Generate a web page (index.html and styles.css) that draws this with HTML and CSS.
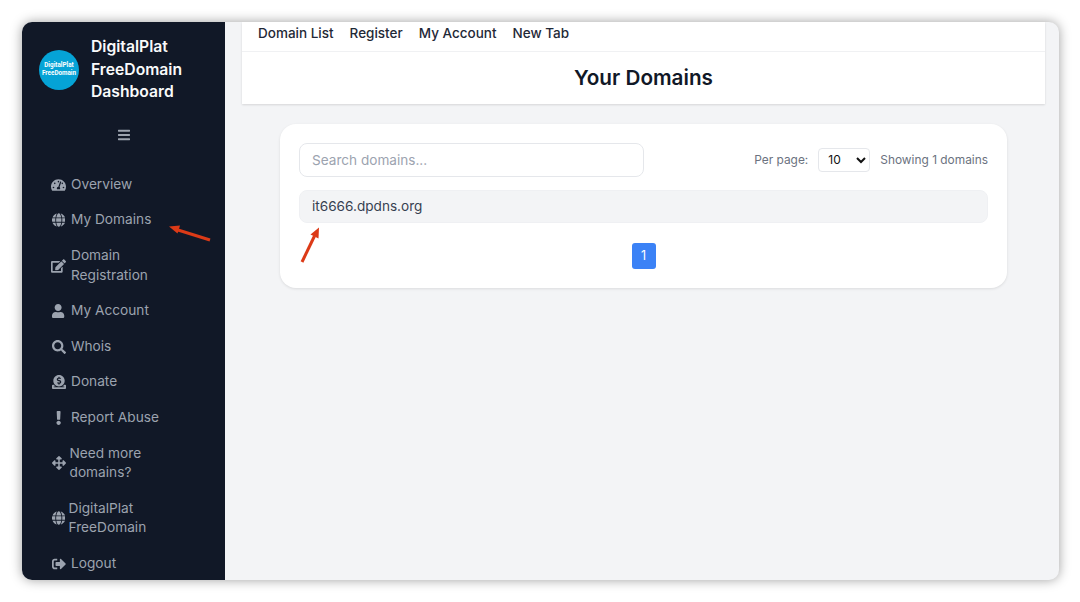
FILE: index.html
```html
<!DOCTYPE html>
<html lang="en">
<head>
<meta charset="utf-8">
<title>Your Domains</title>
<link rel="stylesheet" href="styles.css">
</head>
<body>
<div class="window">
  <aside class="sidebar">
    <div class="brand">
      <div class="logo"><span>DigitalPlat</span><span>FreeDomain</span></div>
      <div class="brand-title">DigitalPlat FreeDomain Dashboard</div>
    </div>
    <div class="toggle">
      <svg class="bars" viewBox="0 0 448 512"><path d="M16 132h416c8.837 0 16-7.163 16-16V76c0-8.837-7.163-16-16-16H16C7.163 60 0 67.163 0 76v40c0 8.837 7.163 16 16 16zm0 160h416c8.837 0 16-7.163 16-16v-40c0-8.837-7.163-16-16-16H16c-8.837 0-16 7.163-16 16v40c0 8.837 7.163 16 16 16zm0 160h416c8.837 0 16-7.163 16-16v-40c0-8.837-7.163-16-16-16H16c-8.837 0-16 7.163-16 16v40c0 8.837 7.163 16 16 16z"/></svg>
    </div>
    <nav class="menu">
      <a class="item"><span class="ic"><svg viewBox="0 0 576 512"><path d="M288 32C128.94 32 0 160.94 0 320c0 52.8 14.25 102.26 39.06 144.8 5.61 9.62 16.3 15.2 27.44 15.2h443c11.14 0 21.83-5.58 27.44-15.2C561.75 422.26 576 372.8 576 320c0-159.06-128.94-288-288-288zm0 64c14.71 0 26.58 10.13 30.32 23.65-1.11 2.26-2.64 4.23-3.45 6.67l-9.22 27.67c-5.13 3.49-10.97 6.01-17.64 6.01-17.67 0-32-14.33-32-32S270.33 96 288 96zM96 384c-17.67 0-32-14.33-32-32s14.33-32 32-32 32 14.33 32 32-14.33 32-32 32zm48-160c-17.67 0-32-14.33-32-32s14.33-32 32-32 32 14.33 32 32-14.33 32-32 32zm246.77-72.41l-61.33 184C343.13 347.33 352 364.54 352 384c0 11.72-3.38 22.55-8.88 32H232.88c-5.5-9.45-8.88-20.28-8.88-32 0-33.94 26.5-61.43 59.9-63.59l61.34-184.01c4.17-12.56 17.73-19.45 30.36-15.17 12.57 4.19 19.35 17.77 15.17 30.36zm14.66 57.2l15.52-46.55c3.47-1.29 7.13-2.23 11.05-2.23 17.67 0 32 14.33 32 32s-14.33 32-32 32c-11.38-.01-20.89-6.28-26.57-15.22zM480 384c-17.67 0-32-14.33-32-32s14.33-32 32-32 32 14.33 32 32-14.33 32-32 32z"/></svg></span><span>Overview</span></a>
      <a class="item"><span class="ic"><svg viewBox="0 0 496 512"><path d="M336.5 160C322 70.7 287.8 8 248 8s-74 62.7-88.5 152h177zM152 256c0 22.2 1.2 43.5 3.3 64h185.3c2.1-20.5 3.3-41.8 3.3-64s-1.2-43.5-3.3-64H155.3c-2.1 20.5-3.3 41.8-3.3 64zm324.7-96c-28.6-67.9-86.5-120.4-158-141.6 24.4 33.8 41.2 84.7 50 141.6h108zM177.2 18.4C105.8 39.6 47.8 92.1 19.3 160h108c8.7-56.9 25.5-107.8 49.9-141.6zM487.4 192H372.7c2.1 21 3.3 42.5 3.3 64s-1.2 43-3.3 64h114.6c5.5-20.5 8.6-41.8 8.6-64s-3.1-43.5-8.5-64zM120 256c0-21.5 1.2-43 3.3-64H8.6C3.2 212.5 0 233.8 0 256s3.2 43.5 8.6 64h114.6c-2-21-3.2-42.5-3.2-64zm39.5 96c14.5 89.3 48.7 152 88.5 152s74-62.7 88.5-152h-177zm159.3 141.6c71.4-21.2 129.4-73.7 158-141.6h-108c-8.8 56.9-25.6 107.8-50 141.6zM19.3 352c28.6 67.9 86.5 120.4 158 141.6-24.4-33.8-41.2-84.7-50-141.6h-108z"/></svg></span><span>My Domains</span></a>
      <a class="item"><span class="ic"><svg viewBox="0 0 576 512"><path d="M402.6 83.2l90.2 90.2c3.8 3.8 3.8 10 0 13.8L274.4 405.6l-92.8 10.3c-12.4 1.4-22.9-9.1-21.5-21.5l10.3-92.8L388.8 83.2c3.8-3.8 10-3.8 13.8 0zm162-22.9l-48.8-48.8c-15.2-15.2-39.9-15.2-55.2 0l-35.4 35.4c-3.8 3.8-3.8 10 0 13.8l90.2 90.2c3.8 3.8 10 3.8 13.8 0l35.4-35.4c15.2-15.3 15.2-40 0-55.2zM384 346.2V448H64V128h229.8c3.2 0 6.2-1.3 8.5-3.5l40-40c7.6-7.6 2.2-20.5-8.5-20.5H48C21.5 64 0 85.5 0 112v352c0 26.5 21.5 48 48 48h352c26.5 0 48-21.5 48-48V306.2c0-10.7-12.9-16-20.5-8.5l-40 40c-2.2 2.3-3.5 5.3-3.5 8.5z"/></svg></span><span class="wrap">Domain<br>Registration</span></a>
      <a class="item"><span class="ic"><svg viewBox="0 0 448 512"><path d="M224 256c70.7 0 128-57.3 128-128S294.7 0 224 0 96 57.3 96 128s57.3 128 128 128zm89.6 32h-16.7c-22.2 10.2-46.9 16-72.9 16s-50.6-5.8-72.9-16h-16.7C60.2 288 0 348.2 0 422.4V464c0 26.5 21.5 48 48 48h352c26.5 0 48-21.5 48-48v-41.6c0-74.2-60.2-134.4-134.4-134.4z"/></svg></span><span>My Account</span></a>
      <a class="item"><span class="ic"><svg viewBox="0 0 512 512"><path d="M505 442.7L405.3 343c-4.5-4.5-10.6-7-17-7H372c27.6-35.3 44-79.7 44-128C416 93.1 322.9 0 208 0S0 93.1 0 208s93.1 208 208 208c48.3 0 92.7-16.4 128-44v16.3c0 6.4 2.5 12.5 7 17l99.7 99.7c9.4 9.4 24.6 9.4 33.9 0l28.3-28.3c9.4-9.4 9.4-24.6.1-34zM208 336c-70.7 0-128-57.2-128-128 0-70.7 57.2-128 128-128 70.7 0 128 57.2 128 128 0 70.7-57.2 128-128 128z"/></svg></span><span>Whois</span></a>
      <a class="item"><span class="ic"><svg viewBox="0 0 512 512"><path d="M256 416c114.9 0 208-93.1 208-208S370.9 0 256 0 48 93.1 48 208s93.1 208 208 208zM233.8 97.4V80.6c0-9.2 7.4-16.6 16.6-16.6h11.1c9.2 0 16.6 7.4 16.6 16.6v17c15.5.8 30.5 6.1 43 15.4 5.6 4.1 6.2 12.3 1.2 17.1L306 145.6c-3.8 3.7-9.5 3.8-14 1-5.4-3.4-11.4-5.1-17.8-5.1h-38.9c-9 0-16.3 8.2-16.3 18.3 0 8.2 5 15.5 12.1 17.6l62.3 18.7c25.7 7.7 43.7 32.4 43.7 60.1 0 34-26.4 61.5-59.1 62.4v16.8c0 9.2-7.4 16.6-16.6 16.6h-11.1c-9.2 0-16.6-7.4-16.6-16.6v-17c-15.5-.8-30.5-6.1-43-15.4-5.6-4.1-6.2-12.3-1.2-17.1l16.3-15.5c3.8-3.7 9.5-3.8 14-1 5.4 3.4 11.4 5.1 17.8 5.1h38.9c9 0 16.3-8.2 16.3-18.3 0-8.2-5-15.5-12.1-17.6l-62.3-18.7c-25.7-7.7-43.7-32.4-43.7-60.1.1-34 26.4-61.5 59.1-62.4zM480 352h-32.5c-19.6 26-44.6 47.7-73 64h63.8c5.3 0 9.6 3.6 9.6 8v16c0 4.4-4.3 8-9.6 8H73.6c-5.3 0-9.6-3.6-9.6-8v-16c0-4.4 4.3-8 9.6-8h63.8c-28.4-16.3-53.3-38-73-64H32c-17.7 0-32 14.3-32 32v96c0 17.7 14.3 32 32 32h448c17.7 0 32-14.3 32-32v-96c0-17.7-14.3-32-32-32z"/></svg></span><span>Donate</span></a>
      <a class="item"><span class="ic"><svg viewBox="0 0 192 512"><path d="M176 432c0 44.112-35.888 80-80 80s-80-35.888-80-80 35.888-80 80-80 80 35.888 80 80zM25.26 25.199l13.6 272C39.499 309.972 50.041 320 62.83 320h66.34c12.789 0 23.331-10.028 23.97-22.801l13.6-272C167.425 11.49 156.496 0 142.77 0H49.23C35.504 0 24.575 11.49 25.26 25.199z"/></svg></span><span>Report Abuse</span></a>
      <a class="item"><span class="ic"><svg viewBox="0 0 512 512"><path d="M352.201 425.775l-79.196 79.196c-9.373 9.373-24.568 9.373-33.941 0l-79.196-79.196c-15.119-15.119-4.411-40.971 16.971-40.97h51.162L228 284H127.196v51.162c0 21.382-25.851 32.09-40.971 16.971L7.029 272.937c-9.373-9.373-9.373-24.569 0-33.941L86.225 159.8c15.119-15.119 40.971-4.411 40.971 16.971V228H228V127.196h-51.23c-21.382 0-32.09-25.851-16.971-40.971l79.196-79.196c9.373-9.373 24.568-9.373 33.941 0l79.196 79.196c15.119 15.119 4.411 40.971-16.971 40.971h-51.162V228h100.804v-51.162c0-21.382 25.851-32.09 40.97-16.971l79.196 79.196c9.373 9.373 9.373 24.569 0 33.941L425.773 352.2c-15.119 15.119-40.971 4.411-40.97-16.971V284H284v100.804h51.23c21.382 0 32.09 25.851 16.971 40.971z"/></svg></span><span class="wrap narrow">Need more<br>domains?</span></a>
      <a class="item"><span class="ic"><svg viewBox="0 0 496 512"><path d="M336.5 160C322 70.7 287.8 8 248 8s-74 62.7-88.5 152h177zM152 256c0 22.2 1.2 43.5 3.3 64h185.3c2.1-20.5 3.3-41.8 3.3-64s-1.2-43.5-3.3-64H155.3c-2.1 20.5-3.3 41.8-3.3 64zm324.7-96c-28.6-67.9-86.5-120.4-158-141.6 24.4 33.8 41.2 84.7 50 141.6h108zM177.2 18.4C105.8 39.6 47.8 92.1 19.3 160h108c8.7-56.9 25.5-107.8 49.9-141.6zM487.4 192H372.7c2.1 21 3.3 42.5 3.3 64s-1.2 43-3.3 64h114.6c5.5-20.5 8.6-41.8 8.6-64s-3.1-43.5-8.5-64zM120 256c0-21.5 1.2-43 3.3-64H8.6C3.2 212.5 0 233.8 0 256s3.2 43.5 8.6 64h114.6c-2-21-3.2-42.5-3.2-64zm39.5 96c14.5 89.3 48.7 152 88.5 152s74-62.7 88.5-152h-177zm159.3 141.6c71.4-21.2 129.4-73.7 158-141.6h-108c-8.8 56.9-25.6 107.8-50 141.6zM19.3 352c28.6 67.9 86.5 120.4 158 141.6-24.4-33.8-41.2-84.7-50-141.6h-108z"/></svg></span><span class="wrap narrower">DigitalPlat<br>FreeDomain</span></a>
      <a class="item"><span class="ic"><svg viewBox="0 0 512 512"><path d="M497 273L329 441c-15 15-41 4.5-41-17v-96H152c-13.3 0-24-10.7-24-24v-96c0-13.3 10.7-24 24-24h136V88c0-21.4 25.9-32 41-17l168 168c9.3 9.4 9.3 24.6 0 34zM192 436v-40c0-6.6-5.4-12-12-12H96c-17.7 0-32-14.3-32-32V160c0-17.7 14.3-32 32-32h84c6.6 0 12-5.4 12-12V76c0-6.6-5.4-12-12-12H96c-53 0-96 43-96 96v192c0 53 43 96 96 96h84c6.6 0 12-5.4 12-12z"/></svg></span><span>Logout</span></a>
    </nav>
  </aside>
  <main class="main">
    <header class="top">
      <nav class="tabs">
        <a>Domain List</a><a>Register</a><a>My Account</a><a>New Tab</a>
      </nav>
      <h1 class="heading">Your Domains</h1>
    </header>
    <section class="card">
      <div class="toolbar">
        <input class="search" type="text" placeholder="Search domains...">
        <div class="controls">
          <span>Per page:</span>
          <select class="per"><option>10</option></select>
          <span>Showing 1 domains</span>
        </div>
      </div>
      <div class="row">it6666.dpdns.org</div>
      <div class="pager"><button class="page">1</button></div>
    </section>
  </main>
</div>
<svg class="marks" viewBox="0 0 1080 602">
  <path class="shaft" d="M210 240 L178 230"/>
  <path class="head" d="M169 226.500 L180 225.500 L177.500 233.500 Z"/>
  <path class="shaft" d="M302 262 L314.500 236"/>
  <path class="head" d="M319 227.500 L318.500 238.500 L310.500 234.500 Z"/>
</svg>
</body>
</html>
```

FILE: styles.css
```css
* { box-sizing: border-box; }
html, body { margin: 0; height: 100%; }
body {
  width: 1080px;
  height: 602px;
  overflow: hidden;
  background: #fff;
  padding: 22px 21px 22px 22px;
  font-family: Inter, "Noto Sans", sans-serif;
  position: relative;
}
.window {
  display: flex;
  height: 558px;
  border-radius: 10px;
  overflow: hidden;
  background: #f3f4f6;
  box-shadow: 0 0 12px rgba(0, 0, 0, 0.38);
}
.sidebar {
  width: 203px;
  flex: none;
  background: #111827;
  color: #9ca3af;
  overflow: hidden;
}
.brand {
  display: flex;
  align-items: center;
  gap: 12px;
  padding: 14px 16px 0 17px;
}
.logo {
  width: 40px;
  height: 40px;
  flex: none;
  border-radius: 50%;
  background: #05a3d6;
  color: #fff;
  display: flex;
  flex-direction: column;
  justify-content: center;
  align-items: center;
  font-family: Roboto, sans-serif;
  font-size: 6.3px;
  font-weight: 700;
  line-height: 7.500px;
}
.brand-title {
  color: #f9fafb;
  font-size: 15.7px;
  font-weight: 600;
  line-height: 22.6px;
  width: 110px;
}
.toggle {
  display: flex;
  justify-content: center;
  margin-top: 24px;
  height: 14px;
}
.bars { width: 12px; height: 14px; fill: #9ca3af; display: block; }
.menu { margin-top: 25px; padding-left: 29px; }
.item {
  display: flex;
  align-items: center;
  padding: 8px 0;
  font-size: 13.7px;
  line-height: 19.6px;
  color: #9ca3af;
}
.ic {
  width: 15px;
  height: 14px;
  margin-right: 5px;
  display: flex;
  align-items: center;
  justify-content: center;
  flex: none;
}
.ic svg { height: 14px; max-width: 15px; fill: #9ca3af; display: block; }
.wrap { display: block; margin-left: 0; }
.narrow { margin-left: -1.500px; }
.narrower { margin-left: -2.500px; }
.main { flex: 1; min-width: 0; padding-right: 14px; padding-left: 17px; }
.top {
  background: #fff;
  box-shadow: 0 1px 2px rgba(0, 0, 0, 0.12);
}
.tabs {
  display: flex;
  gap: 16px;
  height: 30px;
  padding: 0 16px 8px;
  align-items: center;
  border-bottom: 1px solid #f0f1f3;
  font-size: 13.5px;
  font-weight: 500;
  color: #1f2937;
}
.heading {
  margin: 0;
  height: 52px;
  padding-bottom: 2px;
  display: flex;
  align-items: center;
  justify-content: center;
  font-size: 20.7px;
  font-weight: 600;
  color: #111827;
}
.card {
  margin: 19.5px 38px 0 38px;
  height: 164.5px;
  padding: 19px;
  background: #fff;
  border-radius: 16px;
  box-shadow: 0 1px 3px rgba(0, 0, 0, 0.1);
}
.toolbar {
  display: flex;
  justify-content: space-between;
  align-items: center;
}
.search {
  width: 345px;
  height: 34px;
  border: 1px solid #e5e7eb;
  border-radius: 8px;
  padding: 0 12px;
  font: inherit;
  font-size: 13.6px;
  outline: none;
}
.search::placeholder { color: #9ca3af; opacity: 1; }
.controls {
  display: flex;
  align-items: center;
  gap: 10px;
  font-size: 11.9px;
  color: #6b7280;
}
.per {
  width: 52px;
  height: 24px;
  border: 1px solid #e5e7eb;
  border-radius: 4px;
  background: #fff;
  padding-left: 5px;
  font: inherit;
  font-size: 12px;
  color: #111;
}
.row {
  margin-top: 13px;
  height: 33px;
  padding: 0 12px;
  display: flex;
  align-items: center;
  background: #f3f4f6;
  border: 1px solid #eff0f3;
  border-radius: 8px;
  font-size: 13.6px;
  color: #374151;
}
.pager {
  display: flex;
  justify-content: center;
  margin-top: 20px;
}
.page {
  width: 24px;
  height: 26px;
  border: 0;
  border-radius: 3px;
  background: #3b82f6;
  color: #fff;
  font: inherit;
  font-size: 12.5px;
  padding: 0;
}
.marks {
  position: absolute;
  left: 0;
  top: 0;
  width: 1080px;
  height: 602px;
  pointer-events: none;
}
.shaft { stroke: #dc3a17; stroke-width: 3; fill: none; }
.head { fill: #dc3a17; }
```
